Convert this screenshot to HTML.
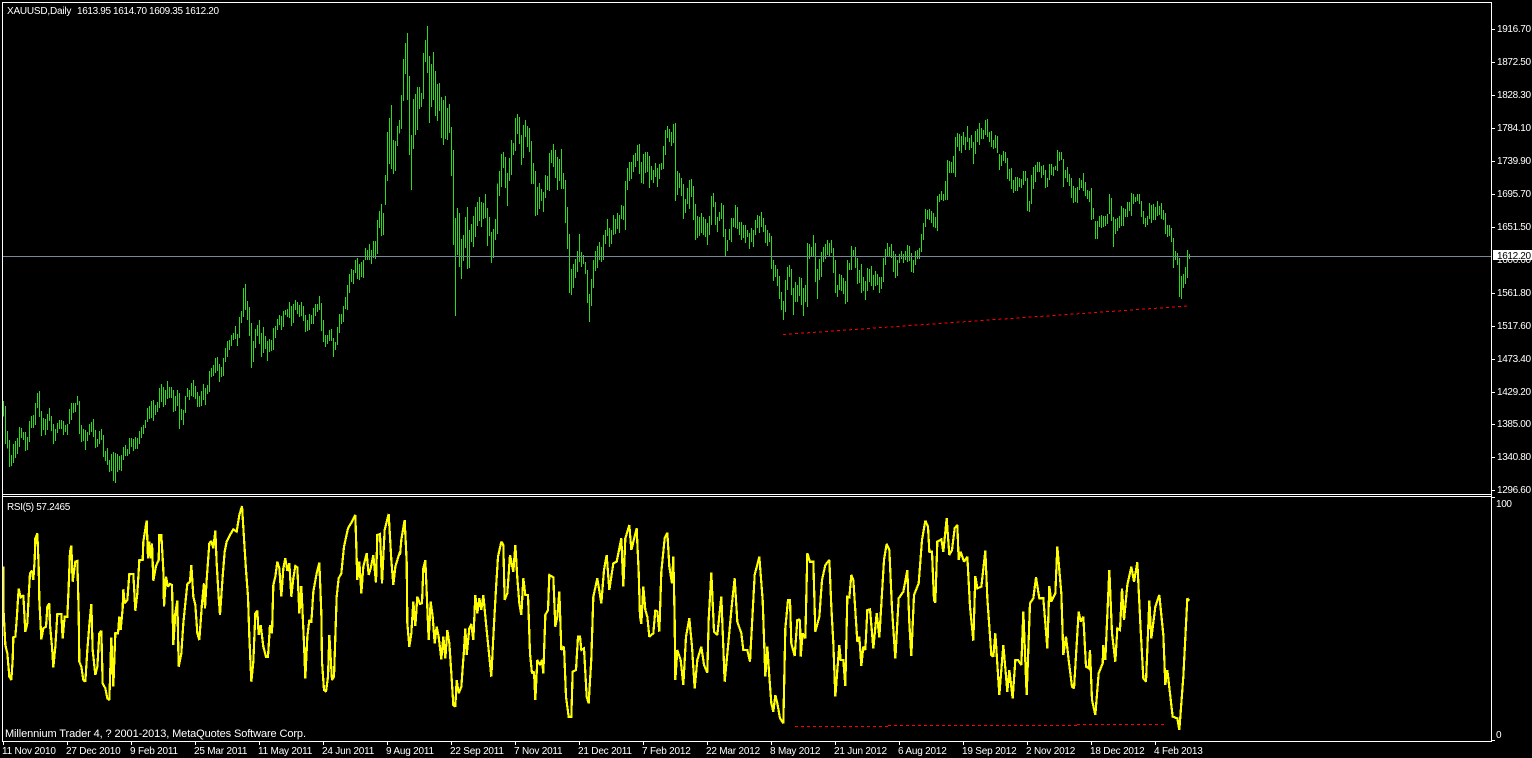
<!DOCTYPE html>
<html><head><meta charset="utf-8"><title>XAUUSD,Daily</title>
<style>
html,body{margin:0;padding:0;background:#000;width:1532px;height:758px;overflow:hidden}
svg{display:block;position:absolute;left:0;top:0}
text{font-family:"Liberation Sans",sans-serif;font-size:10px;fill:#fff;letter-spacing:-.35px}
.d text{letter-spacing:-.2px}
.b{fill:none;stroke:#2bdc1c;stroke-width:3;shape-rendering:crispEdges}
.r{fill:none;stroke:#ffff00;stroke-width:6.6;stroke-linejoin:miter;stroke-miterlimit:2;shape-rendering:crispEdges}
</style></head><body>
<svg width="1532" height="758" viewBox="0 0 1532 758" xmlns="http://www.w3.org/2000/svg">
<rect width="1532" height="758" fill="#000"/>
<!-- bars -->
<g transform="translate(0,380) scale(.333333)"><path class="b" d="M10.5 63V110M16.5 78V192M22.5 153V205M28.5 180V261M34.5 225V258M40.5 192V249M46.5 183V234M52.5 174V222M58.5 141V201M64.5 144V174M70.5 156V180M76.5 156V213M82.5 171V210M88.5 123V186M94.5 108V144M100.5 105V144M106.5 69V135M112.5 39V84M118.5 33V111M124.5 93V168M130.5 114V150M136.5 117V165M142.5 102V150M148.5 84V123M154.5 108V153M160.5 132V192M166.5 147V183M172.5 129V159M178.5 120V147M184.5 120V147M190.5 123V165M196.5 135V156M202.5 132V165M208.5 87V132M214.5 69V120M220.5 69V99M226.5 69V96M232.5 48V75M238.5 63V162M244.5 135V186M250.5 147V183M256.5 150V210M262.5 156V183M268.5 132V165M274.5 126V156M280.5 117V171M286.5 150V204M292.5 177V201M298.5 153V192M304.5 147V180M310.5 165V231M316.5 213V243M322.5 204V255M328.5 240V276M334.5 222V273M340.5 216V303M346.5 219V309M352.5 222V276M358.5 228V270M364.5 225V273M370.5 201V240M376.5 195V228M382.5 207V228M388.5 174V222M394.5 174V201M400.5 177V213M406.5 171V207M412.5 174V207M418.5 153V192M424.5 141V174M430.5 135V162M436.5 120V144M442.5 84V126M448.5 78V117M454.5 63V114M460.5 60V123M466.5 75V105M472.5 66V96M478.5 24V84M484.5 12V66M490.5 21V81M496.5 30V75M502.5 3V57M508.5 21V54M514.5 21V54M520.5 30V96M526.5 48V93M532.5 30V78M538.5 39V147M544.5 87V120M550.5 90V135M556.5 48V99M562.5 24V51M568.5 30V60M574.5 9V48M580.5 0V51M586.5 18V57M592.5 36V81M598.5 48V81M604.5 33V78M610.5 12V60M616.5 24V75M622.5 15V42"/></g>
<g transform="translate(200,200) scale(.333333)"><path class="b" d="M28.5 513V576M34.5 504V531M40.5 495V528M46.5 474V519M52.5 471V513M58.5 492V546M64.5 501V531M70.5 474V528M76.5 444V486M82.5 423V471M88.5 420V450M94.5 405V438M100.5 399V420M106.5 378V417M112.5 402V438M118.5 351V414M124.5 333V369M130.5 264V351M136.5 252V330M142.5 303V360M148.5 321V408M154.5 369V504M160.5 423V486M166.5 387V444M172.5 375V408M178.5 360V432M184.5 399V471M190.5 381V459M196.5 408V447M202.5 423V483M208.5 417V456M214.5 420V453M220.5 384V450M226.5 378V414M232.5 357V390M238.5 345V375M244.5 348V390M250.5 333V381M256.5 330V345M262.5 327V351M268.5 306V354M274.5 318V378M280.5 312V369M286.5 300V330M292.5 306V342M298.5 315V351M304.5 306V348M310.5 318V363M316.5 345V396M322.5 360V393M328.5 342V390M334.5 345V372M340.5 324V372M346.5 312V348M352.5 312V336M358.5 288V330M364.5 309V393M370.5 360V426M376.5 405V441M382.5 405V432M388.5 390V423M394.5 387V423M400.5 414V471M406.5 426V450M412.5 381V435M418.5 342V399M424.5 342V372M430.5 318V366M436.5 291V327M442.5 255V330M448.5 222V279M454.5 207V246M460.5 210V252M466.5 180V219M472.5 174V237M478.5 192V240M484.5 186V231M490.5 180V234M496.5 144V180M502.5 150V180M508.5 132V180M514.5 150V192M520.5 123V174M526.5 123V177M532.5 60V162M538.5 33V84M544.5 12V108M550.5 39V105"/></g>
<g transform="scale(.333333)"><path class="b" d="M1156.5 525V615M1162.5 396V543M1168.5 354V492M1174.5 315V507M1180.5 420V522M1186.5 423V513M1192.5 378V438M1198.5 360V400"/></g>
<g transform="translate(400,20) scale(.333333)"><path class="b" d="M4.5 225V327M10.5 117V243M16.5 69V162M22.5 39V240M28.5 168V405M34.5 345V510M40.5 237V387M46.5 222V345M52.5 201V330M58.5 201V267M64.5 219V261M70.5 99V237M76.5 60V126M82.5 18V159M88.5 108V309M94.5 132V261M100.5 96V240M106.5 153V288M112.5 192V303M118.5 189V273M124.5 231V354M130.5 240V375M136.5 228V357M142.5 264V360M148.5 252V339M154.5 321V468M160.5 390V675M166.5 594V888M172.5 564V705M178.5 579V741M184.5 657V777M190.5 645V723M196.5 591V684M202.5 561V747M208.5 630V744M214.5 612V666M220.5 588V681M226.5 561V651M232.5 546V618M238.5 531V603M244.5 546V621M250.5 549V597M256.5 522V594M262.5 564V678M268.5 591V648M274.5 636V729M280.5 627V714M286.5 597V660M292.5 491V642M298.5 453V528M304.5 402V501M310.5 396V444M316.5 411V504M322.5 459V558M328.5 414V483M334.5 360V465M340.5 369V405M346.5 294V393M352.5 282V342M358.5 291V372M364.5 345V435M370.5 315V414M376.5 300V351M382.5 318V381M388.5 324V396M394.5 363V492M400.5 429V492M406.5 453V588M412.5 501V585M418.5 489V567M424.5 507V543M430.5 516V576M436.5 465V534M442.5 468V510M448.5 399V513M454.5 390V429M460.5 372V441M466.5 390V474M472.5 411V510M478.5 417V483M484.5 387V507M490.5 459V507M496.5 480V609M502.5 561V687M508.5 642V819M514.5 747V825M520.5 732V804M526.5 717V774M532.5 693V756M538.5 642V726M544.5 696V741M550.5 705V732M556.5 726V762M562.5 750V849M568.5 822V906M574.5 777V858M580.5 720V804M586.5 693V753M592.5 678V744M598.5 666V720M604.5 681V726M610.5 645V720M616.5 630V672M622.5 597V648M628.5 624V681M634.5 630V672M640.5 585V645M646.5 597V642M652.5 579V627M658.5 585V639M664.5 555V597M670.5 558V600M676.5 483V630M682.5 444V510M688.5 426V483M694.5 426V477M700.5 405V456M706.5 399V441M712.5 375V423M718.5 372V462M724.5 426V489M730.5 402V492M736.5 396V459M742.5 396V456M748.5 408V504M754.5 438V480M760.5 450V489M766.5 429V471M772.5 444V501M778.5 432V477M784.5 429V450M790.5 378V447M796.5 330V405M802.5 318V354M808.5 327V366M814.5 336V378M820.5 312V369M826.5 309V543M832.5 453V525M838.5 459V504M844.5 474V528M850.5 492V597M856.5 537V579M862.5 504V552M868.5 480V567M874.5 477V531M880.5 498V600M886.5 552V660M892.5 588V654M898.5 591V648"/></g>
<g transform="translate(680,110) scale(.333333)"><path class="b" d="M64.5 309V369M70.5 321V375M76.5 327V381M82.5 339V405M88.5 318V375M94.5 258V345M100.5 249V291M106.5 276V345M112.5 321V366M118.5 306V333M124.5 279V327M130.5 285V381M136.5 357V441M142.5 390V423M148.5 357V390M154.5 324V396M160.5 324V351M166.5 285V354M172.5 291V357M178.5 336V375M184.5 336V390M190.5 345V384M196.5 345V399M202.5 360V381M208.5 369V417M214.5 354V396M220.5 360V411M226.5 330V375M232.5 315V354M238.5 318V369M244.5 306V351M250.5 324V366M256.5 345V399M262.5 360V408M268.5 369V396M274.5 378V477M280.5 450V513M286.5 465V501M292.5 477V528M298.5 498V567M304.5 546V600M310.5 573V630M316.5 510V606M322.5 471V540M328.5 465V501M334.5 477V555M340.5 534V615M346.5 516V576M352.5 525V576M358.5 501V558M364.5 504V585M370.5 534V618M376.5 525V576M382.5 399V591M388.5 402V447M394.5 411V441M400.5 375V438M406.5 399V516M412.5 477V567M418.5 447V510M424.5 426V501M430.5 411V456M436.5 402V447M442.5 390V435M448.5 399V441M454.5 390V429M460.5 414V489M466.5 450V549M472.5 525V561M478.5 492V540M484.5 495V543M490.5 504V552M496.5 513V582M502.5 450V576M508.5 459V480M514.5 408V480M520.5 420V438M526.5 411V474M532.5 444V522M538.5 480V519M544.5 462V549M550.5 501V543M556.5 513V570M562.5 474V543M568.5 477V516M574.5 468V528M580.5 495V540M586.5 483V528M592.5 492V525M598.5 501V549M604.5 501V537M610.5 444V516M616.5 417V465M622.5 399V441M628.5 411V438M634.5 402V444M640.5 423V486M646.5 432V504M652.5 450V498M658.5 432V459M664.5 423V447M670.5 432V459M676.5 423V450M682.5 405V456M688.5 408V453M694.5 429V486M700.5 450V489M706.5 423V465M712.5 420V447M718.5 414V447M724.5 372V426M730.5 339V390M736.5 297V351M742.5 300V327M748.5 297V330"/></g>
<g transform="translate(930,110) scale(.333333)"><path class="b" d="M4.5 303V339M10.5 309V351M16.5 321V354M22.5 258V363M28.5 252V276M34.5 243V270M40.5 252V273M46.5 213V270M52.5 150V270M58.5 153V189M64.5 156V189M70.5 138V189M76.5 81V201M82.5 69V111M88.5 72V123M94.5 78V129M100.5 66V105M106.5 81V120M112.5 48V96M118.5 84V120M124.5 75V114M130.5 96V162M136.5 63V132M142.5 57V96M148.5 39V105M154.5 54V87M160.5 60V87M166.5 30V75M172.5 27V81M178.5 66V96M184.5 63V111M190.5 90V117M196.5 75V114M202.5 78V129M208.5 132V180M214.5 135V168M220.5 123V153M226.5 126V159M232.5 144V207M238.5 177V213M244.5 174V237M250.5 210V249M256.5 201V243M262.5 201V243M268.5 204V231M274.5 207V234M280.5 183V225M286.5 183V213M292.5 204V303M298.5 273V306M304.5 195V282M310.5 171V237M316.5 165V216M322.5 156V186M328.5 156V186M334.5 168V204M340.5 165V195M346.5 180V234M352.5 204V231M358.5 162V210M364.5 162V195M370.5 171V198M376.5 168V180M382.5 120V183M388.5 126V153M394.5 126V150M400.5 147V231M406.5 180V204M412.5 171V216M418.5 192V228M424.5 204V264M430.5 228V279M436.5 234V276M442.5 231V279M448.5 204V240M454.5 210V234M460.5 189V243M466.5 216V258M472.5 240V267M478.5 243V276M484.5 234V330M490.5 294V327M496.5 333V387M502.5 333V387M508.5 318V351M514.5 315V354M520.5 318V351M526.5 318V348M532.5 312V342M538.5 252V312M544.5 264V333M550.5 321V411M556.5 327V372M562.5 324V363M568.5 318V354M574.5 288V348M580.5 294V348M586.5 297V321M592.5 276V321M598.5 276V303M604.5 249V318M610.5 252V282M616.5 261V276M622.5 252V273M628.5 252V282M634.5 273V321M640.5 303V342M646.5 324V351M652.5 318V345M658.5 279V327M664.5 285V339M670.5 282V330M676.5 291V330M682.5 273V318M688.5 288V315M694.5 279V327M700.5 300V330M706.5 309V372M712.5 345V381M718.5 345V378M724.5 354V396M730.5 384V474M736.5 423V450M742.5 429V465M748.5 444V561M754.5 498V567M760.5 492V534M766.5 471V522M772.5 420V504M778.5 432V447"/></g>
<!-- red trend lines -->
<path d="M783 334.5L1188 306" fill="none" stroke="#ff0000" stroke-width="1" stroke-dasharray="3 3" shape-rendering="crispEdges"/>
<path d="M795 726.5L888 726.5M888 725.5L1077 725.5M1077 724.5L1164 724.5" fill="none" stroke="#ff0000" stroke-width="1" stroke-dasharray="3 3" shape-rendering="crispEdges"/>
<!-- current price line -->
<rect x="3" y="256" width="1488" height="1" fill="#778899"/>
<!-- RSI -->
<g transform="translate(0,480) scale(.333333)"><polyline class="r" points="10,260 10,380 16,495 22,520 28,590 34,600 38,540 40,472 46,470 50,420 56,326 62,352 70,346 76,456 82,430 86,350 90,280 96,272 100,300 104,240 106,175 112,160 116,260 118,360 124,478 130,445 138,440 142,380 148,370 150,435 156,500 160,562 166,500 172,402 184,402 188,475 194,410 202,410 206,320 210,215 214,197 218,305 226,245 232,243 236,395 238,545 244,560 250,600 256,605 262,510 268,435 274,372 278,510 286,585 292,560 298,460 304,452 308,610 316,625 322,655 328,660 334,472 340,620 346,460 354,460 358,410 362,450 368,385 370,328 374,370 382,360 388,282 400,282 406,392 412,340 418,240 428,240 430,185 440,122 444,235 448,185 452,235 456,190 460,302 468,258 476,240 478,165 484,165 490,270 492,380 498,290 504,320 510,312 516,315 520,495 526,400 532,362 536,560 544,520 550,430 556,370 562,312 570,305 574,255 580,350 586,375 592,460 598,480 606,370 612,310 615,385 620,300 628,190 634,183 640,205 646,152 650,250 656,350 660,405 668,290 674,215 680,185 690,165 700,148 710,155 718,105 726,78 732,175 738,270 744,350 748,470 754,605 760,545 766,400 772,392 776,465 782,435 790,500 798,530 804,530 810,435 816,460 820,315 826,290 832,245 838,265 844,350 850,265 856,235 862,272 868,250 874,350 880,295 886,258 892,262 898,400 904,318 912,490 916,595 922,470 928,420 934,428 940,335 950,280 958,248 964,400 966,545 972,630 978,635 984,590 988,465 996,600 1002,590 1010,350 1016,295 1024,280 1032,200 1044,145 1054,128 1066,105 1072,300 1078,245 1084,340 1090,260 1100,220 1106,285 1112,265 1120,225 1128,308 1132,165 1140,162 1146,310 1154,150 1166,102 1174,240 1180,315 1186,260 1192,240 1200,215"/></g>
<g transform="translate(400,500) scale(.333333)"><polyline class="r" points="0,165 4,120 14,60 20,185 22,370 28,440 34,400 40,305 46,378 52,290 60,312 66,310 70,205 76,180 80,275 86,420 92,305 98,350 104,430 110,380 116,410 124,478 130,410 136,475 142,390 148,430 154,520 160,615 166,620 170,540 176,580 184,560 192,450 196,385 200,465 208,385 214,372 220,420 226,285 232,340 238,295 244,330 250,285 258,370 268,470 274,530 280,410 288,265 294,170 304,125 310,135 314,300 322,280 330,165 340,215 346,135 352,235 358,310 364,345 370,235 376,285 384,285 390,460 396,520 402,515 406,600 412,480 420,495 426,480 430,520 436,345 444,330 448,225 460,232 466,380 472,350 478,275 484,450 492,440 498,590 506,650 514,650 518,515 528,510 534,410 540,410 544,450 552,445 560,590 566,610 574,475 580,290 592,235 604,310 612,210 620,165 628,270 640,190 650,185 664,115 670,260 676,115 688,75 694,150 710,85 716,215 720,350 724,372 730,260 736,330 742,350 748,410 760,400 766,330 772,335 778,395 784,215 794,115 802,98 808,200 816,250 820,170 824,360 826,540 832,450 842,480 850,555 858,410 868,355 876,440 884,565 892,480 904,440 912,495 922,518 926,360 934,218 942,395 952,405 964,290 974,545 984,440 996,310 1004,235 1012,365 1024,400 1030,450 1042,450 1050,485 1064,225 1078,170 1088,300 1096,530 1102,440 1108,530 1114,610 1120,635 1126,585 1132,610 1140,655 1150,670 1156,385 1164,300 1170,300 1174,430 1184,468 1192,360 1200,358"/></g>
<g transform="translate(800,500) scale(.333333)"><polyline class="r" points="0,358 2,470 8,400 16,415 22,160 30,185 40,185 46,395 58,350 66,240 76,195 88,180 94,320 100,430 106,590 112,510 118,435 122,480 130,480 136,558 142,290 148,292 154,225 160,240 172,425 178,410 184,498 190,440 196,450 202,330 210,328 220,445 230,340 238,412 246,280 252,180 260,132 268,150 276,325 286,476 296,295 310,275 322,210 328,370 334,468 342,285 356,250 366,120 376,62 384,80 388,155 396,155 402,300 406,308 412,125 424,118 430,155 440,55 448,165 456,150 464,85 472,75 476,180 482,155 492,185 502,170 510,320 520,422 526,228 532,265 544,260 556,152 562,295 574,465 580,470 586,400 598,585 610,435 622,575 628,510 638,595 646,480 654,480 664,495 670,335 680,585 690,310 700,295 708,232 718,295 730,295 742,445 748,258 754,305 766,280 772,140 784,280 790,465 798,410 806,480 816,560 822,565 836,335 842,365 850,350 858,500 866,505 870,450 876,600 886,645 896,520 908,490 910,435 916,480 928,210 936,400 946,485 952,385 960,390 966,265 972,360 982,255 994,200 1002,245 1012,187 1022,390 1030,535 1038,545 1048,302 1054,415 1066,320 1078,285 1090,405 1096,555 1102,510 1118,650 1132,655 1138,690 1150,530 1162,295 1168,302"/></g>
<!-- frames -->
<g fill="#fff" shape-rendering="crispEdges">
<rect x="2" y="2" width="1490" height="1"/>
<rect x="2" y="2" width="1" height="740"/>
<rect x="1491" y="2" width="1" height="740"/>
<rect x="2" y="494" width="1490" height="1"/>
<rect x="2" y="496" width="1490" height="1"/>
<rect x="2" y="741" width="1490" height="1"/>
<rect x="1492" y="29" width="3" height="1"/><rect x="1492" y="62" width="3" height="1"/><rect x="1492" y="95" width="3" height="1"/><rect x="1492" y="128" width="3" height="1"/><rect x="1492" y="161" width="3" height="1"/><rect x="1492" y="194" width="3" height="1"/><rect x="1492" y="227" width="3" height="1"/><rect x="1492" y="293" width="3" height="1"/><rect x="1492" y="326" width="3" height="1"/><rect x="1492" y="359" width="3" height="1"/><rect x="1492" y="392" width="3" height="1"/><rect x="1492" y="424" width="3" height="1"/><rect x="1492" y="457" width="3" height="1"/><rect x="1492" y="490" width="3" height="1"/>
<rect x="1492" y="497" width="3" height="1"/><rect x="1492" y="740" width="3" height="1"/>
<rect x="3" y="742" width="1" height="3"/><rect x="67" y="742" width="1" height="3"/><rect x="131" y="742" width="1" height="3"/><rect x="195" y="742" width="1" height="3"/><rect x="259" y="742" width="1" height="3"/><rect x="323" y="742" width="1" height="3"/><rect x="387" y="742" width="1" height="3"/><rect x="451" y="742" width="1" height="3"/><rect x="515" y="742" width="1" height="3"/><rect x="579" y="742" width="1" height="3"/><rect x="643" y="742" width="1" height="3"/><rect x="707" y="742" width="1" height="3"/><rect x="771" y="742" width="1" height="3"/><rect x="835" y="742" width="1" height="3"/><rect x="899" y="742" width="1" height="3"/><rect x="963" y="742" width="1" height="3"/><rect x="1027" y="742" width="1" height="3"/><rect x="1091" y="742" width="1" height="3"/><rect x="1155" y="742" width="1" height="3"/>
</g>
<!-- header text -->
<text x="7" y="14" textLength="64" lengthAdjust="spacing">XAUUSD,Daily</text>
<text x="77" y="14">1613.95</text><text x="113" y="14">1614.70</text><text x="149" y="14">1609.35</text><text x="185" y="14">1612.20</text>
<text x="7" y="510">RSI(5) 57.2465</text>
<text x="5" y="737" style="font-size:11px;letter-spacing:0" textLength="301" lengthAdjust="spacing">Millennium Trader 4, ? 2001-2013, MetaQuotes Software Corp.</text>
<!-- price axis -->
<text x="1497" y="32">1916.70</text><text x="1497" y="65">1872.50</text><text x="1497" y="98">1828.30</text><text x="1497" y="131">1784.10</text><text x="1497" y="164">1739.90</text><text x="1497" y="197">1695.70</text><text x="1497" y="230">1651.50</text><text x="1497" y="263">1606.60</text><text x="1497" y="296">1561.80</text><text x="1497" y="329">1517.60</text><text x="1497" y="362">1473.40</text><text x="1497" y="395">1429.20</text><text x="1497" y="427">1385.00</text><text x="1497" y="460">1340.80</text><text x="1497" y="493">1296.60</text>
<rect x="1493" y="250" width="39" height="10" fill="#fff" shape-rendering="crispEdges"/>
<text x="1497" y="259" style="fill:#000">1612.20</text>
<text x="1496" y="507">100</text><text x="1496" y="738">0</text>
<!-- time axis -->
<g class="d"><text x="2" y="754">11 Nov 2010</text><text x="66" y="754">27 Dec 2010</text><text x="130" y="754">9 Feb 2011</text><text x="194" y="754">25 Mar 2011</text><text x="258" y="754">11 May 2011</text><text x="322" y="754">24 Jun 2011</text><text x="386" y="754">9 Aug 2011</text><text x="450" y="754">22 Sep 2011</text><text x="514" y="754">7 Nov 2011</text><text x="578" y="754">21 Dec 2011</text><text x="642" y="754">7 Feb 2012</text><text x="706" y="754">22 Mar 2012</text><text x="770" y="754">8 May 2012</text><text x="834" y="754">21 Jun 2012</text><text x="898" y="754">6 Aug 2012</text><text x="962" y="754">19 Sep 2012</text><text x="1026" y="754">2 Nov 2012</text><text x="1090" y="754">18 Dec 2012</text><text x="1154" y="754">4 Feb 2013</text></g>
</svg>
</body></html>
